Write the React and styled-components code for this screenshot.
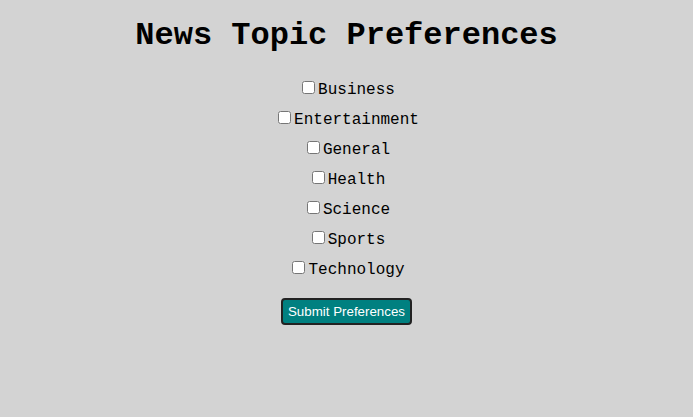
import styled, { createGlobalStyle } from "styled-components";

const GlobalStyle = createGlobalStyle`
  html, body {
    margin: 0;
    padding: 0;
    background-color: lightgray;
    font-family: "Liberation Mono", "Courier New", monospace;
  }
`;

const Page = styled.div`
  display: flex;
  flex-direction: column;
  align-items: center;
  padding-top: 17px;
  min-height: 100vh;
  box-sizing: border-box;
`;

const Title = styled.h1`
  margin: 0 0 24px 0;
  font-size: 32px;
  font-weight: bold;
  color: #000;
`;

const Form = styled.form`
  display: flex;
  flex-direction: column;
  align-items: center;
`;

const TopicList = styled.div`
  display: flex;
  flex-direction: column;
  align-items: center;
  gap: 9px;
  margin-bottom: 19px;
`;

const TopicLabel = styled.label`
  font-size: 16px;
  color: #000;
  line-height: 18px;
`;

const Box = styled.input`
  margin: 3px 3px 3px 4px;
`;

const SubmitButton = styled.button`
  font-family: "Liberation Sans", Arial, sans-serif;
  font-size: 13.33px;
  color: white;
  background-color: teal;
  border: 2px solid #222;
  border-radius: 4px;
  padding: 4px 5px;
  cursor: pointer;
`;

const topics = ["Business", "Entertainment", "General", "Health", "Science", "Sports", "Technology"];

export default function App() {
  return (
    <>
      <GlobalStyle />
      <Page>
        <Title>News Topic Preferences</Title>
        <Form onSubmit={(e) => e.preventDefault()}>
          <TopicList>
            {topics.map((topic) => (
              <TopicLabel key={topic}>
                <Box type="checkbox" name={topic.toLowerCase()} />
                {topic}
              </TopicLabel>
            ))}
          </TopicList>
          <SubmitButton type="submit">Submit Preferences</SubmitButton>
        </Form>
      </Page>
    </>
  );
}
